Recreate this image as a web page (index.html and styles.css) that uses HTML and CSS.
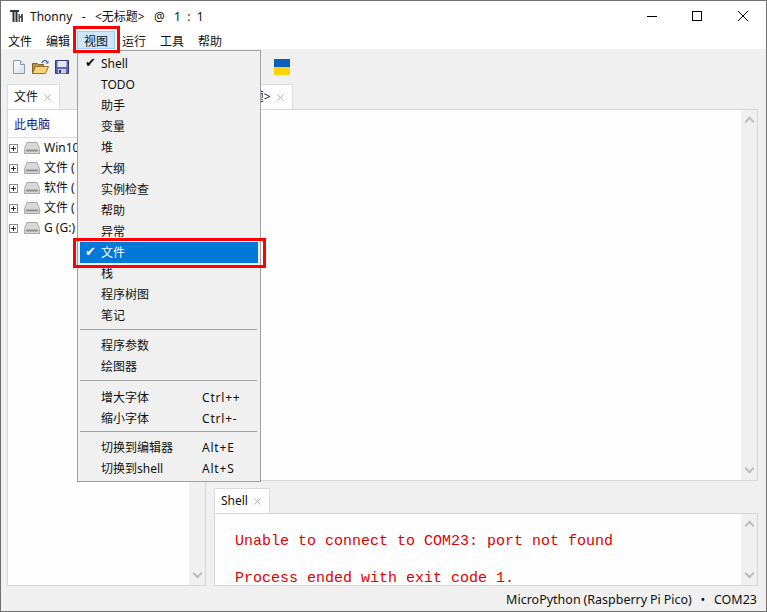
FILE: index.html
```html
<!DOCTYPE html>
<html lang="zh">
<head>
<meta charset="utf-8">
<title>Thonny</title>
<link rel="stylesheet" href="styles.css">
</head>
<body>
<div class="window">
  <header class="titlebar">
    <svg class="logo" width="14" height="12" viewBox="0 0 14 12"><path d="M0 0h9v2H7.500v10h-2V2h-1v10h-2V2H0z" fill="#333"/><path d="M8.500 4H10v2h1V4h2v8h-2V8h-1v4H8.500z" fill="#555"/></svg>
    <span class="title">Thonny&nbsp;&nbsp;&nbsp;-&nbsp;&nbsp;&nbsp;&lt;无标题&gt;&nbsp;&nbsp;&nbsp;@&nbsp;&nbsp;&nbsp;1&nbsp;&nbsp;:&nbsp;&nbsp;1</span>
    <div class="wincontrols">
      <svg width="12" height="12" viewBox="0 0 12 12"><path d="M2 6.500h10" stroke="#000"/></svg>
      <svg width="12" height="12" viewBox="0 0 12 12"><rect x="1.500" y="1.500" width="9" height="9" fill="none" stroke="#000"/></svg>
      <svg width="12" height="12" viewBox="0 0 12 12"><path d="M1 1l10 10M11 1L1 11" stroke="#000"/></svg>
    </div>
  </header>
  <nav class="menubar">
    <span class="menuitem">文件</span>
    <span class="menuitem">编辑</span>
    <span class="menuitem active">视图</span>
    <span class="menuitem">运行</span>
    <span class="menuitem">工具</span>
    <span class="menuitem">帮助</span>
  </nav>
  <div class="toolbar">
    <svg class="tool" width="16" height="16" viewBox="0 0 16 16"><defs><linearGradient id="pg" x1="0" y1="0" x2="1" y2="1"><stop offset="0" stop-color="#ffffff"/><stop offset="1" stop-color="#cfdcec"/></linearGradient></defs><path d="M2.500 1.500h7l4 4v9h-11z" fill="url(#pg)" stroke="#8b97a8"/><path d="M9.500 1.500v4h4" fill="#e8eef6" stroke="#8b97a8"/></svg>
    <svg class="tool" width="17" height="16" viewBox="0 0 17 16"><path d="M.500 14.500v-10h5l1 1h5v2h-8z" fill="#c2923a" stroke="#7e6228"/><path d="M.500 14.500l3-7h13l-3 7z" fill="#f7d577" stroke="#94742c"/><path d="M10 4c1-3 4-3 5-1" fill="none" stroke="#3f6fa6" stroke-width="1.500"/><path d="M13.500 4.500h3v-3z" fill="#3f6fa6"/></svg>
    <svg class="tool" width="16" height="16" viewBox="0 0 16 16"><path d="M1.500 1.500h13v13h-13z" fill="#5c64bb" stroke="#33397c"/><path d="M3.500 2h9v6h-9z" fill="#e4e7f6"/><path d="M4 10h8v4.500H4z" fill="#c9ccd8"/><path d="M5 11h2v3H5z" fill="#333a70"/></svg>
    <svg class="flag" width="16" height="16" viewBox="0 0 16 16"><path d="M0 0h16v8H0z" fill="#0a5fbd"/><path d="M0 8h16v8H0z" fill="#fed500"/></svg>
  </div>
  <main class="workspace">
    <section class="leftcol">
      <div class="tabs"><span class="tab">文件<svg class="close" width="7" height="7" viewBox="0 0 7 7"><path d="M.500.500l6 6M6.500.500l-6 6" stroke="#b4b4b4"/></svg></span></div>
      <div class="panel filepanel">
        <div class="pathbar">此电脑</div>
        <div class="tree">
          <ul class="treelist">
            <li><b class="plus"></b><svg class="drive" width="16" height="12" viewBox="0 0 16 12"><path d="M3 .500h10l2.500 6v5H.500v-5z" fill="#d8d8d8" stroke="#a8a8a8"/><path d="M2 7.500h12v2H2z" fill="#8e8e8e"/></svg>Win10</li>
            <li><b class="plus"></b><svg class="drive" width="16" height="12" viewBox="0 0 16 12"><path d="M3 .500h10l2.500 6v5H.500v-5z" fill="#d8d8d8" stroke="#a8a8a8"/><path d="M2 7.500h12v2H2z" fill="#8e8e8e"/></svg>文件 (</li>
            <li><b class="plus"></b><svg class="drive" width="16" height="12" viewBox="0 0 16 12"><path d="M3 .500h10l2.500 6v5H.500v-5z" fill="#d8d8d8" stroke="#a8a8a8"/><path d="M2 7.500h12v2H2z" fill="#8e8e8e"/></svg>软件 (</li>
            <li><b class="plus"></b><svg class="drive" width="16" height="12" viewBox="0 0 16 12"><path d="M3 .500h10l2.500 6v5H.500v-5z" fill="#d8d8d8" stroke="#a8a8a8"/><path d="M2 7.500h12v2H2z" fill="#8e8e8e"/></svg>文件 (</li>
            <li><b class="plus"></b><svg class="drive" width="16" height="12" viewBox="0 0 16 12"><path d="M3 .500h10l2.500 6v5H.500v-5z" fill="#d8d8d8" stroke="#a8a8a8"/><path d="M2 7.500h12v2H2z" fill="#8e8e8e"/></svg>G (G:)</li>
          </ul>
          <div class="scrollbar"><span class="up"></span><span class="down"></span></div>
        </div>
      </div>
    </section>
    <section class="rightcol">
      <div class="tabs"><span class="tab">&lt;无标题&gt;<svg class="close" width="7" height="7" viewBox="0 0 7 7"><path d="M.500.500l6 6M6.500.500l-6 6" stroke="#b4b4b4"/></svg></span></div>
      <div class="panel editor"><div class="fill"></div><div class="scrollbar"><span class="up"></span><span class="down"></span></div></div>
      <div class="tabs shelltabs"><span class="tab">Shell<svg class="close" width="7" height="7" viewBox="0 0 7 7"><path d="M.500.500l6 6M6.500.500l-6 6" stroke="#b4b4b4"/></svg></span></div>
      <div class="panel shell">
        <pre class="output">Unable to connect to COM23: port not found

Process ended with exit code 1.</pre>
        <div class="scrollbar"><span class="up"></span><span class="down"></span></div>
      </div>
    </section>
  </main>
  <footer class="statusbar">MicroPython (Raspberry Pi Pico)&nbsp;&nbsp;&nbsp;•&nbsp;&nbsp;&nbsp;COM23</footer>

  <div class="dropdown">
    <div class="row check">Shell</div>
    <div class="row">TODO</div>
    <div class="row">助手</div>
    <div class="row">变量</div>
    <div class="row">堆</div>
    <div class="row">大纲</div>
    <div class="row">实例检查</div>
    <div class="row">帮助</div>
    <div class="row">异常</div>
    <div class="row check selected">文件</div>
    <div class="row">栈</div>
    <div class="row">程序树图</div>
    <div class="row">笔记</div>
    <hr>
    <div class="row">程序参数</div>
    <div class="row">绘图器</div>
    <hr>
    <div class="row">增大字体<kbd>Ctrl++</kbd></div>
    <div class="row">缩小字体<kbd>Ctrl+-</kbd></div>
    <hr>
    <div class="row">切换到编辑器<kbd>Alt+E</kbd></div>
    <div class="row">切换到shell<kbd>Alt+S</kbd></div>
  </div>
  <div class="mark mark-menu"></div>
  <div class="mark mark-row"></div>
</div>
</body>
</html>
```
FILE: styles.css
```css
* { box-sizing: border-box; }
html, body { margin: 0; height: 100%; }
body { font: 12px/16px "Noto Sans", "Noto Sans CJK SC", sans-serif; color: #111; }
.window { position: relative; width: 767px; height: 612px; border: 1px solid #6f6f6f; background: #f0f0f0; display: flex; flex-direction: column; overflow: hidden; }
.titlebar { height: 31px; background: #fff; display: flex; align-items: center; padding-left: 9px; flex: none; }
.logo { margin-right: 6px; margin-bottom: 2px; }
.wincontrols { margin-left: auto; margin-bottom: 2px; display: flex; gap: 34px; padding-right: 17px; }
.menubar { height: 17px; background: #fff; display: flex; flex: none; }
.menuitem { width: 38px; height: 18px; line-height: 19px; text-align: center; }
.active { background: #cce8ff; outline: 1px solid #99d1ff; outline-offset: -1px; margin-top: -1px; line-height: 21px; }
.toolbar { height: 35px; display: flex; align-items: center; padding-left: 10px; flex: none; }
.tool { margin-top: 1px; }
.tool:nth-child(n+2) { margin-left: 5px; }
.flag { margin-left: 204px; }
.workspace { flex: 1; min-height: 0; display: flex; padding: 0 8px 0 6px; gap: 8px; }
.leftcol { width: 199px; display: flex; flex-direction: column; flex: none; }
.rightcol { flex: 1; min-width: 0; display: flex; flex-direction: column; }
.tabs { height: 25px; display: flex; flex: none; }
.tab { background: #fff; border: 1px solid #dcdcdc; border-bottom: 0; padding: 4px 8px 0 6px; height: 25px; white-space: nowrap; }
.close { margin-left: 6px; }
.panel { border: 1px solid #d6d6d6; background: #fefefe; display: flex; min-height: 0; }
.filepanel { flex: 1; flex-direction: column; }
.pathbar { height: 28px; padding: 7px 6px 0; color: #1a1a8c; border-bottom: 1px solid #e0e0e0; flex: none; }
.tree { flex: 1; display: flex; min-height: 0; }
.treelist { flex: 1; min-width: 0; list-style: none; margin: 0; padding: 0 0 0 1px; }
.treelist li { height: 20px; display: flex; align-items: center; white-space: nowrap; }
.plus { width: 9px; height: 9px; flex: none; border: 1px solid #8a8a8a; margin-right: 6px; background: linear-gradient(#333,#333) center/5px 1px no-repeat, linear-gradient(#333,#333) center/1px 5px no-repeat, #fff; }
.drive { margin-right: 4px; flex: none; }
.scrollbar { width: 16px; flex: none; background: #f0f0f0; display: flex; flex-direction: column; justify-content: space-between; align-items: center; padding: 5px 0; }
.up, .down { width: 7px; height: 7px; border: solid #bdbdbd; border-width: 2px 0 0 2px; transform: rotate(45deg); margin-top: 3px; }
.down { transform: rotate(225deg); margin: 0 0 3px; }
.editor { flex: 1; }
.fill, .output { flex: 1; min-width: 0; }
.shelltabs { margin-top: 7px; }
.shell { height: 73px; flex: none; overflow: hidden; }
.output { margin: 0; padding: 19px 0 0 20px; font: 15px/18.5px "Liberation Mono", monospace; color: #e00000; }
.statusbar { height: 25px; flex: none; text-align: right; padding: 6px 9px 0 0; font-size: 12.5px; word-spacing: -.35px; }
.dropdown { position: absolute; left: 76px; top: 49px; width: 184px; height: 432px; background: #f0f0f0; border: 1px solid #a0a0a0; padding: 2px; }
.row { height: 21px; line-height: 22px; padding-left: 21px; position: relative; }
.row kbd { font: inherit; position: absolute; left: 122px; top: 0; letter-spacing: .8px; }
.check::before { content: "✔"; position: absolute; left: 5px; top: 0; font-size: 13px; line-height: 20px; font-family: "DejaVu Sans", sans-serif; }
.selected { background: #0078d7; color: #fff; }
.dropdown hr { margin: 3px 1px 5px 0; border: 0; border-top: 1px solid #a0a0a0; height: 0; }
.dropdown hr:nth-of-type(2) { margin: 3px 1px 6px 0; }
.dropdown hr:nth-of-type(3) { margin: 2px 1px 5px 0; }
.mark { position: absolute; border: 3px solid #f00; }
.mark-menu { left: 72px; top: 25px; width: 47px; height: 27px; }
.mark-row { left: 72px; top: 237px; width: 193px; height: 30px; }
```
